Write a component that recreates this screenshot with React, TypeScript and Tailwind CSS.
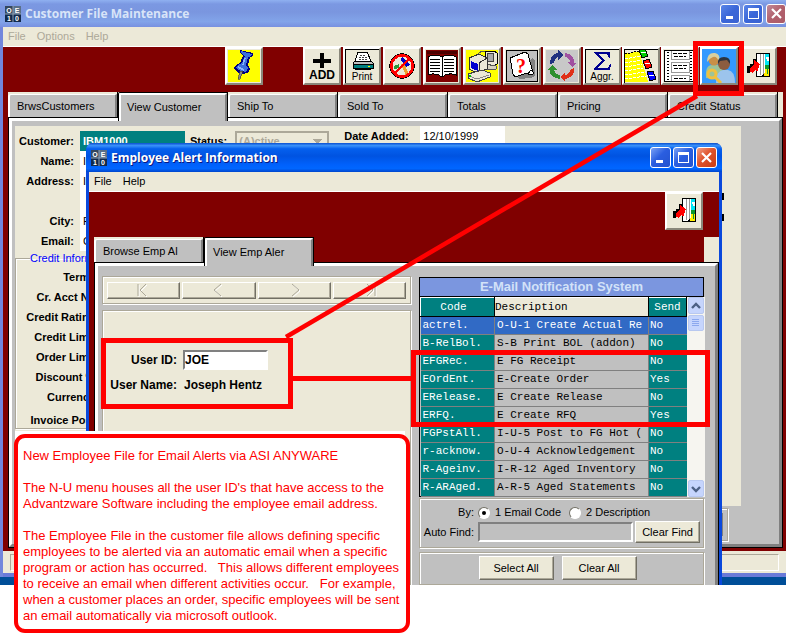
import React from "react";

const etched = "border border-[#aca899] shadow-[inset_1px_1px_0_#fff,1px_1px_0_#fff]";
const raised =
  "border border-t-white border-l-white border-b-[#716f64] border-r-[#716f64] bg-[#ece9d8] shadow-[inset_-1px_-1px_0_#aca899]";

function AppIcon() {
  return (
    <svg width="16" height="16" viewBox="0 0 16 16" className="shrink-0" aria-hidden="true">
      <rect width="16" height="16" fill="#8ea0b4" />
      <rect width="7.5" height="7.5" fill="#33475f" />
      <rect x="8.5" width="7.5" height="7.5" fill="#5a7088" />
      <rect y="8.5" width="7.5" height="7.5" fill="#122a4c" />
      <rect x="8.5" y="8.5" width="7.5" height="7.5" fill="#122a4c" />
      <g fill="#fff" fontFamily="Liberation Sans, sans-serif" fontSize="7" fontWeight="700" textAnchor="middle">
        <text x="4" y="6.5">O</text>
        <text x="12" y="6.5">E</text>
        <text x="4" y="14.5">1</text>
        <text x="12" y="14.5">0</text>
      </g>
    </svg>
  );
}

function CaptionButtons({ active }: { active: boolean }) {
  const base = "grid place-items-center rounded-[3px] border border-white text-white";
  const size = active ? "size-[21px]" : "size-5";
  const blue = active
    ? "bg-[linear-gradient(135deg,#7ba2f5,#2a5ee0_45%,#2453cf)]"
    : "bg-[linear-gradient(135deg,#5b86e8,#3a66d8_50%,#3a62d0)] border-[#c0cff4]";
  const red = active
    ? "bg-[linear-gradient(135deg,#f0a088,#e0532c_45%,#c93c14)]"
    : "bg-[linear-gradient(135deg,#c08a98,#b2606c_50%,#aa5c68)] border-[#c0cff4]";
  return (
    <div className={`flex ${active ? "gap-[2px]" : "gap-[3px]"}`}>
      <button aria-label="Minimize" className={`${base} ${size} ${blue}`}>
        <svg width="17" height="17" viewBox="0 0 17 17"><path d="M4 11h7v3H4z" fill="#fff" /></svg>
      </button>
      <button aria-label="Maximize" className={`${base} ${size} ${blue}`}>
        <svg width="17" height="17" viewBox="0 0 17 17"><path d="M3 3h11v11H3zM4 6v7h9V6z" fill="#fff" fillRule="evenodd" /></svg>
      </button>
      <button aria-label="Close" className={`${base} ${size} ${red}`}>
        <svg width="17" height="17" viewBox="0 0 17 17"><path d="M4 4l9 9M13 4l-9 9" stroke="#fff" strokeWidth="2.2" /></svg>
      </button>
    </div>
  );
}

function Tab({ label, active }: { label: string; active?: boolean }) {
  if (active) {
    return (
      <button
        role="tab"
        aria-selected="true"
        className="relative z-10 h-[29px] w-[110px] shrink-0 rounded-tl-[2px] border-t border-r border-l border-black bg-[#c0c0c0]"
      >
        <span className="flex h-full items-center rounded-tl-[2px] border-t-2 border-r-2 border-l-2 border-t-white border-r-[#808080] border-l-white pb-[2px] pl-[6px]">
          {label}
        </span>
      </button>
    );
  }
  return (
    <button role="tab" aria-selected="false" className="h-[26px] w-[110px] shrink-0 border-r border-b border-black bg-[#ece9d8] pt-[2px]">
      <span className="flex h-full items-center rounded-tl-[3px] border-t border-r-2 border-l-2 border-t-white border-r-[#808080] border-l-white bg-[#c0c0c0] pl-[7px]">
        {label}
      </span>
    </button>
  );
}

function ToolButton({ label, children, tone }: { label: string; children: React.ReactNode; tone?: string }) {
  return (
    <button
      aria-label={label}
      className="grid size-[38px] shrink-0 place-items-center border-t-2 border-r-2 border-b-2 border-l-2 border-t-white border-r-[#8a877a] border-b-[#8a877a] border-l-white bg-[#ece9d8]"
    >
      <svg width="34" height="34" viewBox="0 0 34 34" shapeRendering="crispEdges" className={tone}>
        {children}
      </svg>
    </button>
  );
}

function ExitIcon() {
  return (
    <g>
      <rect x="15" y="4" width="14" height="24" fill="#000" />
      <rect x="23" y="5" width="5" height="22" fill="#00e5f5" />
      <path d="M25 8h3v4h-2z" fill="#fff" />
      <path d="M23 19l2-2h3v10h-5z" fill="#ffee00" />
      <path d="M24 16h4v4h-1v5h-1v-5h-2z" fill="#0a9a2a" />
      <path d="M16 5h8v19l-4 3h-4z" fill="#fff" />
      <path d="M19 5v21M22 5v20" stroke="#999" />
      <path d="M6 17h3v-2h3v-5h3v5l-3 7h-3v2H6z" fill="#000" />
      <path d="M9 19l4-3v-5l6 4-3 8-2-2-2 3-3-1z" fill="#f00" />
    </g>
  );
}

function PinIcon() {
  return (
    <g>
      <rect x="1" y="1" width="32" height="32" fill="#ff0" />
      <path d="M13 1l13 3v3l-3 1-2 8 2 4-1 3-5 2-5-1-5-4 1-3 5-3 3-7-3-3z" fill="#000080" />
      <path d="M14 2l11 3-1 2-3 1-2 8 2 3-2 4-5-1-5-3 1-2 5-3 3-7-4-3z" fill="#3c6edc" />
      <path d="M18 9l-2 7M11 18l6 3" stroke="#8cb4ff" strokeWidth="1.5" />
      <path d="M16 22l-3 8h-2l2-8z" fill="#888" stroke="#333" strokeWidth=".6" />
    </g>
  );
}

const glyphFont = "Liberation Sans, sans-serif";

function Toolbar() {
  return (
    <div role="toolbar" className="flex h-[45px] shrink-0 pl-[222px]">
      <ToolButton label="Pin"><PinIcon /></ToolButton>
      <div className="ml-10 flex gap-[2px]">
        <ToolButton label="Add">
          <path d="M15 4h4v6h7v4h-7v5h-4v-5H8v-4h7z" fill="#000" />
          <text x="17" y="30" textAnchor="middle" fontFamily={glyphFont} fontWeight="700" fontSize="12">ADD</text>
        </ToolButton>
        <ToolButton label="Print">
          <path d="M0 34V0h34" fill="none" stroke="#000" strokeWidth="2" />
          <path d="M13 3h9l4 9H10z" fill="#fff" stroke="#000" />
          <path d="M15 6h6M14 8h8M14 10h9" stroke="#444" strokeDasharray="2 1" />
          <path d="M10 12h16l2 2v2H8v-2z" fill="#c0c0c0" stroke="#000" />
          <path d="M8 15h20v4H8z" fill="#008080" stroke="#000" />
          <path d="M23 17h2" stroke="#ff0" />
          <path d="M10 19h16v2H10z" fill="#000" />
          <text x="17" y="31" textAnchor="middle" fontFamily={glyphFont} fontSize="10">Print</text>
        </ToolButton>
        <ToolButton label="Cancel edit">
          <path d="M17 8l8 8-4 2-5-7z" fill="#0000c8" />
          <path d="M19 14l5 11-3 2-5-12z" fill="#f0a030" />
          <path d="M9 17l5-2v4l-5 1z" fill="#2a9a3a" />
          <circle cx="17" cy="17" r="11" fill="none" stroke="#000" strokeWidth="3.4" />
          <circle cx="17" cy="17" r="10.6" fill="none" stroke="#f00" strokeWidth="2.6" />
          <path d="M25 9L9 25" stroke="#f00" strokeWidth="2.8" />
        </ToolButton>
        <ToolButton label="Book">
          <rect x="1" y="1" width="32" height="32" fill="#800000" />
          <path d="M2 2h30v3H2z" fill="#4c0000" />
          <path d="M3 8q7-4 14 0 7-4 14 0v18q-8-3-14 2-6-5-14-2z" fill="#fff" stroke="#000" />
          <path d="M17 8v20" stroke="#000" />
          <path d="M5 11q5-2 10 0M5 14q5-2 10 0M5 17q5-2 10 0M5 20q5-2 10 0M5 23q5-2 10 0M19 11q5-2 10 0M19 14q5-2 10 0M19 17q5-2 10 0M19 20q5-2 10 0M19 23q5-2 10 0" fill="none" stroke="#000" />
        </ToolButton>
        <ToolButton label="Copy">
          <rect x="1" y="1" width="32" height="32" fill="#ff0" />
          <path d="M13 5q5-5 8-1" stroke="#555" fill="none" />
          <path d="M20 2h9l3 2v11l-4 3-8-4z" fill="#ece9d8" stroke="#000" />
          <path d="M22 4h6v8h-6z" fill="#aaa" stroke="#444" />
          <path d="M20 15l11 2v3l-9 1z" fill="#d8d4c0" stroke="#555" />
          <path d="M4 9l10-4 8 4v11l-10 4-8-4z" fill="#ece9d8" stroke="#333" />
          <path d="M6 12l7 3v7l-7-3z" fill="#0000d0" />
          <path d="M14 14l8-5M14 14v9" stroke="#333" />
          <path d="M3 25l14-4 8 3v4l-13 5-9-4z" fill="#ece9d8" stroke="#444" />
          <path d="M4 27l8 3 12-4" fill="none" stroke="#888" />
          <path d="M4 26h2v2H4z" fill="#0c0" />
        </ToolButton>
        <ToolButton label="Help">
          <rect x="1" y="1" width="32" height="32" fill="#000" />
          <rect x="2" y="2" width="30" height="30" fill="#c0c0c0" />
          <path d="M12 26l15-17 3 3v15l-4 2-12 1z" fill="#808080" />
          <path d="M5 9l5-2 10-4 3 2 5 19-3 2-3-2-12 4-2-3z" fill="#fff" stroke="#000" />
          <path d="M26 21l3 3-2 2-4-1z" fill="#fff" stroke="#000" />
          <text x="16" y="24" textAnchor="middle" fontFamily="Liberation Serif, serif" fontWeight="700" fontSize="20" fill="#f00">?</text>
        </ToolButton>
        <ToolButton label="Refresh">
          <rect x="1" y="1" width="32" height="32" fill="#c8c8c8" />
          <path d="M5 15q0-10 8-11V1l5 5-5 5V8q-3 1-4 6z" fill="#203080" />
          <path d="M20 4q9 1 9 10h3l-5 4-5-5h3q-1-5-5-5z" fill="#a050a0" />
          <path d="M29 19q1 9-9 11v3l-5-5 5-5v3q5-1 6-6z" fill="#e03018" />
          <path d="M15 30Q4 28 5 21H2l5-5 5 5H9q1 4 6 5z" fill="#309030" />
        </ToolButton>
        <ToolButton label="Aggregate">
          <path d="M0 34V0h34" fill="none" stroke="#000" strokeWidth="2" />
          <path d="M9 3h16v6h-1q-1-4-4-4h-7l7 6-8 8h9q3 0 4-4h1l-1 6H9v-1l8-9-8-7z" fill="#000090" />
          <text x="17" y="31" textAnchor="middle" fontFamily={glyphFont} fontSize="10">Aggr.</text>
        </ToolButton>
      </div>
      <div className="ml-px flex gap-px">
        <ToolButton label="Notebook">
          <path d="M0 34V0h34" fill="none" stroke="#000" strokeWidth="2" />
          <path d="M1 5l14-3 9 31H1z" fill="#ff0" />
          <path d="M1 5l14-3" stroke="#000" strokeDasharray="2 1" />
          <path d="M1 10l15-3M1 14l16-3M1 18l17-3M1 22l18-3M1 26l20-3M1 30l21-3" stroke="#fff" strokeDasharray="3 1" />
          <path d="M15 1l6-1 3 7-6 2z" fill="#0c0" stroke="#000" />
          <path d="M19 12l6-2 3 8-6 2z" fill="#f00" stroke="#000" />
          <path d="M23 23l6-1 3 8-6 2z" fill="#00f" stroke="#000" />
          <path d="M17 4l5-1M21 15l5-1M25 27l5-1" stroke="#fff" />
        </ToolButton>
        <ToolButton label="List">
          <rect x="1" y="1" width="32" height="32" fill="#000" />
          <rect x="2" y="2" width="30" height="30" fill="#fff" />
          <path d="M5 3v29M28 3v29" stroke="#000" strokeDasharray="1 2" strokeWidth="1.5" />
          <path d="M8 2v8h18V2M8 13h18v10H8zM8 32v-6h18v6" fill="none" stroke="#999" />
          <path d="M10 4h14M11 7h12M10 16h14M11 19h12M11 29h12" stroke="#000" strokeDasharray="4 1" />
        </ToolButton>
        <ToolButton label="Employee alerts" tone="[shape-rendering:auto]">
          <rect width="36" height="36" fill="#3399ff" />
          <path d="M4 29q-1-13 6-13h6q5 0 5 10l-4 5z" fill="#9cc49a" />
          <circle cx="12" cy="11" r="5.5" fill="#c89048" />
          <path d="M5 13q0-10 8-9 6 1 4 9-2-6-6-5-3 1-6 5z" fill="#d8d0a0" />
          <path d="M14 34q0-12 7-13h5q7 1 7 13z" fill="#9cc4ec" />
          <circle cx="22" cy="15" r="6" fill="#8c5c40" />
          <path d="M16 15q-1-7 6-7t6 7l-3-4-7 1z" fill="#2c3440" />
          <circle cx="10" cy="25" r="4" fill="none" stroke="#f0c040" strokeWidth="3" />
          <path d="M13 28l6 6" stroke="#f0c040" strokeWidth="3" />
        </ToolButton>
        <ToolButton label="Exit"><ExitIcon /></ToolButton>
      </div>
    </div>
  );
}

const topFields = [
  { id: "name", label: "Name:", value: "IBM" },
  { id: "address", label: "Address:", value: "IBM" },
  { id: "address2", label: "", value: "" },
  { id: "city", label: "City:", value: "Phila" },
  { id: "email", label: "Email:", value: "Contact" },
];

const creditLabels = ["Terms:", "Cr. Acct No:", "Credit Rating:", "Credit Limit:", "Order Limit:", "Discount %:", "Currency:"];

function CustomerForm() {
  return (
    <div className="h-[380px] w-[726px] shrink-0 overflow-hidden bg-[#ece9d8] text-[11px] leading-5">
      <div className="flex">
        <div className="w-[170px] pt-[5px]">
          <div className="flex h-5">
            <label htmlFor="customer" className="w-[59px] shrink-0 text-right font-bold">Customer:</label>
            <input id="customer" defaultValue="IBM1000" className="ml-[6px] h-5 w-[105px] bg-[#008080] pl-[3px] font-bold text-white" />
          </div>
          {topFields.map((f) => (
            <div key={f.id} className="flex h-5">
              <label htmlFor={f.id} className="w-[59px] shrink-0 text-right font-bold">{f.label}</label>
              <input id={f.id} aria-label={f.label || "Address line 2"} defaultValue={f.value} className="ml-[6px] h-5 w-[105px] bg-white pl-[3px]" />
            </div>
          ))}
        </div>
        <div className="flex pt-[5px] pl-[5px]">
          <label htmlFor="status" className="font-bold">Status:</label>
          <select
            id="status"
            disabled
            className="ml-[8px] h-5 w-[94px] appearance-none border-2 border-[#aca899] bg-[#ece9d8] bg-[linear-gradient(45deg,transparent_50%,#aca899_50%),linear-gradient(-45deg,transparent_50%,#aca899_50%)] bg-[length:5px_5px] bg-[position:76px_6px,81px_6px] bg-no-repeat pl-[2px] font-bold leading-4 text-[#aca899]"
          >
            <option>(A)ctive</option>
          </select>
        </div>
        <div className="ml-[15px] flex">
          <label htmlFor="added" className="w-[76px] font-bold">Date Added:</label>
          <input id="added" defaultValue="12/10/1999" className="h-5 w-[85px] bg-white pl-[3px]" />
        </div>
        <div className="mr-[17px] ml-auto flex flex-col gap-[14px] pt-[67px]">
          <i className="h-[7px] w-[2px] bg-black" />
          <i className="h-[7px] w-[2px] bg-black" />
        </div>
      </div>
      <fieldset className={`mt-px h-[177px] w-[300px] ${etched}`}>
        <legend className="ml-[14px] h-3 leading-3 text-[#0000ff]">Credit Information</legend>
        <div className="w-[83px] pt-[3px] text-right font-bold whitespace-nowrap">
          {creditLabels.map((l) => (
            <p key={l}>{l}</p>
          ))}
          <p className="mt-[3px]">Invoice Post:</p>
        </div>
      </fieldset>
    </div>
  );
}

function MainWindow() {
  return (
    <section className="flex h-[577px] flex-col border-l-[3px] border-[#7286dc] bg-[#800000]">
      <header className="-ml-[3px] flex h-[27px] shrink-0 items-center bg-[linear-gradient(180deg,#8fb0f0,#7b98e2_15%,#7a96df_45%,#82a4e9_80%,#7891e0)] pl-[5px] text-[#d8e4f8]">
        <AppIcon />
        <h1 className="ml-1 flex-1 font-['Open_Sans','Liberation_Sans',sans-serif] text-[12px] font-bold">Customer File Maintenance</h1>
        <CaptionButtons active={false} />
      </header>
      <nav className="flex h-5 shrink-0 items-center gap-[11px] border-b border-white bg-[#ece9d8] pl-[5px] text-[11px] text-[#aca899]">
        <span>File</span>
        <span>Options</span>
        <span>Help</span>
      </nav>
      <Toolbar />
      <div role="tablist" className="mr-[3px] ml-[5px] flex h-[28px] shrink-0 bg-[#ece9d8] text-[11px]">
        <Tab label="BrwsCustomers" />
        <Tab label="View Customer" active />
        <Tab label="Ship To" />
        <Tab label="Sold To" />
        <Tab label="Totals" />
        <Tab label="Pricing" />
        <Tab label="Credit Status" />
      </div>
      <div className="-mt-[3px] mr-[3px] mb-[3px] ml-[5px] flex min-h-0 flex-1 flex-col border border-black">
        <div className="flex min-h-0 flex-1 flex-col overflow-hidden border-t-[3px] border-r-[3px] border-b-[3px] border-l-[3px] border-t-white border-r-[#808080] border-b-[#808080] border-l-white bg-[#c0c0c0] pt-[5px] pl-[3px]">
          <CustomerForm />
          <div className={`mt-[2px] h-[33px] w-[713px] shrink-0 p-1 ${etched}`}>
            <div className="h-full border border-[#808080]" />
          </div>
        </div>
      </div>
      <footer className="flex h-[26px] shrink-0 border-b-[4px] border-[#6a7ad8] bg-[#ece9d8] px-[7px] pt-[3px]">
        <div className="h-[17px] flex-1 border border-t-[#aca899] border-r-white border-b-white border-l-[#aca899]" />
      </footer>
    </section>
  );
}

function NavButton({ label, d }: { label: string; d: string }) {
  return (
    <button aria-label={label} disabled className={`grid h-[17px] flex-1 place-items-center ${raised}`}>
      <svg width="14" height="13" viewBox="0 0 14 13" fill="none" className="overflow-visible">
        <path d={d} stroke="#fff" transform="translate(1 1)" />
        <path d={d} stroke="#aca899" />
      </svg>
    </button>
  );
}

const alerts = [
  ["actrel.", "O-U-1 Create Actual Re", "No"],
  ["B-RelBol.", "S-B Print BOL (addon)", "No"],
  ["EFGRec.", "E FG Receipt", "No"],
  ["EOrdEnt.", "E-Create Order", "Yes"],
  ["ERelease.", "E Create Release", "No"],
  ["ERFQ.", "E Create RFQ", "Yes"],
  ["FGPstAll.", "I-U-5 Post to FG Hot (", "No"],
  ["r-acknow.", "O-U-4 Acknowledgement", "No"],
  ["R-Ageinv.", "I-R-12 Aged Inventory", "No"],
  ["R-ARAged.", "A-R-5 Aged Statements", "No"],
];

function AlertTable() {
  return (
    <div className="h-[220px] border border-black bg-[#c0c0c0]">
      <h3 className="h-[19px] border-b border-black bg-[#7b96df] text-center text-[13px] leading-[18px] font-bold text-[#d3e2f8]">
        E-Mail Notification System
      </h3>
      <div className="flex">
        <table className="w-[266px] table-fixed border-collapse font-['Liberation_Mono',monospace] text-[11px] leading-[17px]">
          <colgroup>
            <col className="w-[74px]" />
            <col className="w-[154px]" />
            <col className="w-[38px]" />
          </colgroup>
          <thead>
            <tr className="h-[19px]">
              <th className="border-t border-r border-b border-l border-t-white border-r-black border-b-black border-l-white bg-[#008080] p-0 pr-2 text-center font-normal text-white">Code</th>
              <th className="border-t border-r border-b border-t-white border-r-black border-b-black bg-[#ece9d8] p-0 text-left font-normal">Description</th>
              <th className="border-t border-r border-b border-l border-t-white border-r-black border-b-black border-l-white bg-[#008080] p-0 text-center font-normal text-white">Send</th>
            </tr>
          </thead>
          <tbody>
            {alerts.map(([code, description, send], i) => (
              <tr key={code} className={i === 0 ? "h-[18px] bg-[#316ac5] text-white" : "h-[18px]"}>
                <td className={`overflow-hidden border-r border-b border-[#808080] p-0 pl-[2px] whitespace-nowrap text-white ${i === 0 ? "" : "bg-[#008080]"}`}>{code}</td>
                <td className="overflow-hidden border-r border-b border-[#808080] p-0 pl-[2px] whitespace-nowrap">{description}</td>
                <td className={`overflow-hidden border-b border-[#808080] p-0 pl-px whitespace-nowrap text-white ${i === 0 ? "" : "bg-[#008080]"}`}>{send}</td>
              </tr>
            ))}
          </tbody>
        </table>
        <div className="flex flex-1 flex-col bg-[#f6f5f0] px-px">
          <ScrollButton label="Scroll up" d="M3 8l4-4 4 4" />
          <div className="mt-px grid h-4 place-items-center rounded-[2px] border border-[#b8c8f0] bg-[#c6d5fd]">
            <svg width="8" height="8" viewBox="0 0 8 8"><path d="M0 .5h7M0 2.5h7M0 4.5h7M0 6.5h7" stroke="#8ca8ee" /></svg>
          </div>
          <div className="flex-1" />
          <ScrollButton label="Scroll down" d="M3 4l4 4 4-4" />
        </div>
      </div>
    </div>
  );
}

function ScrollButton({ label, d }: { label: string; d: string }) {
  return (
    <button aria-label={label} className="grid h-[17px] place-items-center rounded-[2px] border border-[#b8c8f0] bg-[#c6d5fd]">
      <svg width="14" height="12" viewBox="0 0 14 12"><path d={d} fill="none" stroke="#4d6185" strokeWidth="2.4" /></svg>
    </button>
  );
}

function Radio({ id, label, checked }: { id: string; label: string; checked?: boolean }) {
  return (
    <span className="flex items-center">
      <input
        id={id}
        type="radio"
        name="find-by"
        defaultChecked={checked}
        className="grid size-3 appearance-none place-content-center rounded-full border border-t-[#716f64] border-r-white border-b-white border-l-[#716f64] bg-white before:size-1 before:rounded-full before:content-[''] checked:before:bg-black"
      />
      <label htmlFor={id} className="ml-[5px]">{label}</label>
    </span>
  );
}

function EmployeeDialog() {
  return (
    <section className="absolute top-[143px] left-[86px] flex h-[442px] w-[636px] flex-col rounded-t-[7px] border-x-[3px] border-[#0a48dc] bg-[#800000]">
      <header className="-mx-[3px] flex h-[29px] shrink-0 items-center rounded-t-[7px] bg-[linear-gradient(180deg,#0a4fd0,#3a92fa_9%,#0560ee_20%,#0053e1_45%,#0061fc_75%,#0066ff_88%,#0046cc)] pr-[5px] pl-[5px] text-white">
        <AppIcon />
        <h2 className="ml-1 flex-1 font-['Open_Sans','Liberation_Sans',sans-serif] text-[12px] font-bold [text-shadow:1px_1px_0_#0a1883]">
          Employee Alert Information
        </h2>
        <CaptionButtons active />
      </header>
      <nav className="flex h-5 shrink-0 items-center gap-[11px] border-b border-white bg-[#ece9d8] pl-[5px] text-[11px]">
        <span>File</span>
        <span>Help</span>
      </nav>
      <div className="flex h-[45px] shrink-0 justify-end pr-[16px]">
        <ToolButton label="Exit"><ExitIcon /></ToolButton>
      </div>
      <div role="tablist" className="ml-[5px] flex h-[28px] shrink-0 text-[11px]">
        <Tab label="Browse Emp Al" />
        <Tab label="View Emp Aler" active />
        <div className="ml-auto h-[26px] w-[15px] bg-[#ece9d8]" />
      </div>
      <div className="-mt-[3px] ml-[5px] flex min-h-0 flex-1 border-t border-r border-l border-black">
        <div className="flex min-h-0 flex-1 gap-2 overflow-hidden border-t-[3px] border-r-[3px] border-l-[3px] border-t-white border-r-[#808080] border-l-white bg-[#c0c0c0] pt-[10px] pl-1">
          <div className="flex w-[309px] flex-col gap-[6px]">
            <div className={`flex h-[28px] shrink-0 items-center gap-[2px] bg-[#ece9d8] px-[4px] ${etched}`}>
              <NavButton label="First" d="M1 0v12M9 0L3 6l6 6" />
              <NavButton label="Previous" d="M9 0L2 6l7 6" />
              <NavButton label="Next" d="M5 0l7 6-7 6" />
              <NavButton label="Last" d="M5 0l6 6-6 6M13 0v12" />
            </div>
            <div className={`flex flex-1 flex-col bg-[#ece9d8] pt-[39px] text-[12px] leading-5 ${etched}`}>
              <div className="flex">
                <label htmlFor="user-id" className="w-[74px] text-right font-bold">User ID:</label>
                <input
                  id="user-id"
                  defaultValue="JOE"
                  className="ml-[6px] h-5 w-[85px] border-2 border-t-[#808080] border-r-white border-b-white border-l-[#808080] bg-white font-bold"
                />
              </div>
              <div className="mt-[5px] flex font-bold">
                <span className="w-[74px] text-right whitespace-nowrap">User Name:</span>
                <span className="ml-[7px]">Joseph Hentz</span>
              </div>
            </div>
          </div>
          <div className="flex w-[285px] flex-col pt-px text-[11px]">
            <AlertTable />
            <div className={`mt-px h-[50px] shrink-0 pt-[6px] ${etched}`}>
              <div className="flex h-[15px] items-center leading-[15px]">
                <span className="mr-1 w-[54px] text-right">By:</span>
                <Radio id="by-code" label="1 Email Code" checked />
                <span className="w-2" />
                <Radio id="by-desc" label="2 Description" />
              </div>
              <div className="mt-px flex items-center">
                <label htmlFor="auto-find" className="w-[54px] text-right whitespace-nowrap">Auto Find:</label>
                <input id="auto-find" className="ml-1 h-5 w-[155px] border-2 border-t-[#808080] border-r-white border-b-white border-l-[#808080] bg-[#c0c0c0]" />
                <button className={`ml-[2px] h-[22px] w-[65px] whitespace-nowrap ${raised}`}>Clear Find</button>
              </div>
            </div>
            <div className={`mt-[4px] flex flex-1 justify-center gap-[8px] pt-[3px] pr-2 ${etched}`}>
              <button className={`h-[24px] w-[75px] ${raised}`}>Select All</button>
              <button className={`h-[24px] w-[75px] ${raised}`}>Clear All</button>
            </div>
          </div>
        </div>
      </div>
    </section>
  );
}

function Annotations() {
  return (
    <>
      <svg width="786" height="640" viewBox="0 0 786 640" className="pointer-events-none absolute top-0 left-0" fill="none" stroke="#f00" aria-hidden="true">
        <rect x="695.5" y="43.5" width="46" height="50" strokeWidth="5" />
        <path d="M697 96L286 337" strokeWidth="4.5" />
        <rect x="103.5" y="340.5" width="187" height="66" strokeWidth="5" />
        <path d="M293 378.5H412" strokeWidth="5" />
        <rect x="413.5" y="352.5" width="294" height="72" strokeWidth="5" />
      </svg>
      <div className="absolute top-[431px] left-[15px] h-[154px] w-[390px] bg-white" />
      <aside className="absolute top-[434px] left-[14px] h-[199px] w-[396px] rounded-[11px] border-[4px] border-[#f00] bg-white pt-[10px] pl-[5px] text-[13px] leading-4 whitespace-pre text-[#f00]">
        <p>New Employee File for Email Alerts via ASI ANYWARE</p>
        <p className="mt-4">{"The N-U menu houses all the user ID's that have access to the\nAdvantzware Software including the employee email address."}</p>
        <p className="mt-4">
          {"The Employee File in the customer file allows defining specific\nemployees to be alerted via an automatic email when a specific\nprogram or action has occurred.   This allows different employees\nto receive an email when different activities occur.   For example,\nwhen a customer places an order, specific employees will be sent\nan email automatically via microsoft outlook."}
        </p>
      </aside>
    </>
  );
}

export default function App() {
  return (
    <main className="relative min-h-[640px] overflow-hidden bg-white font-['Liberation_Sans',Arial,sans-serif] text-black">
      <div className="relative h-[585px] overflow-hidden bg-[#004e98]">
        <MainWindow />
        <EmployeeDialog />
      </div>
      <Annotations />
    </main>
  );
}
